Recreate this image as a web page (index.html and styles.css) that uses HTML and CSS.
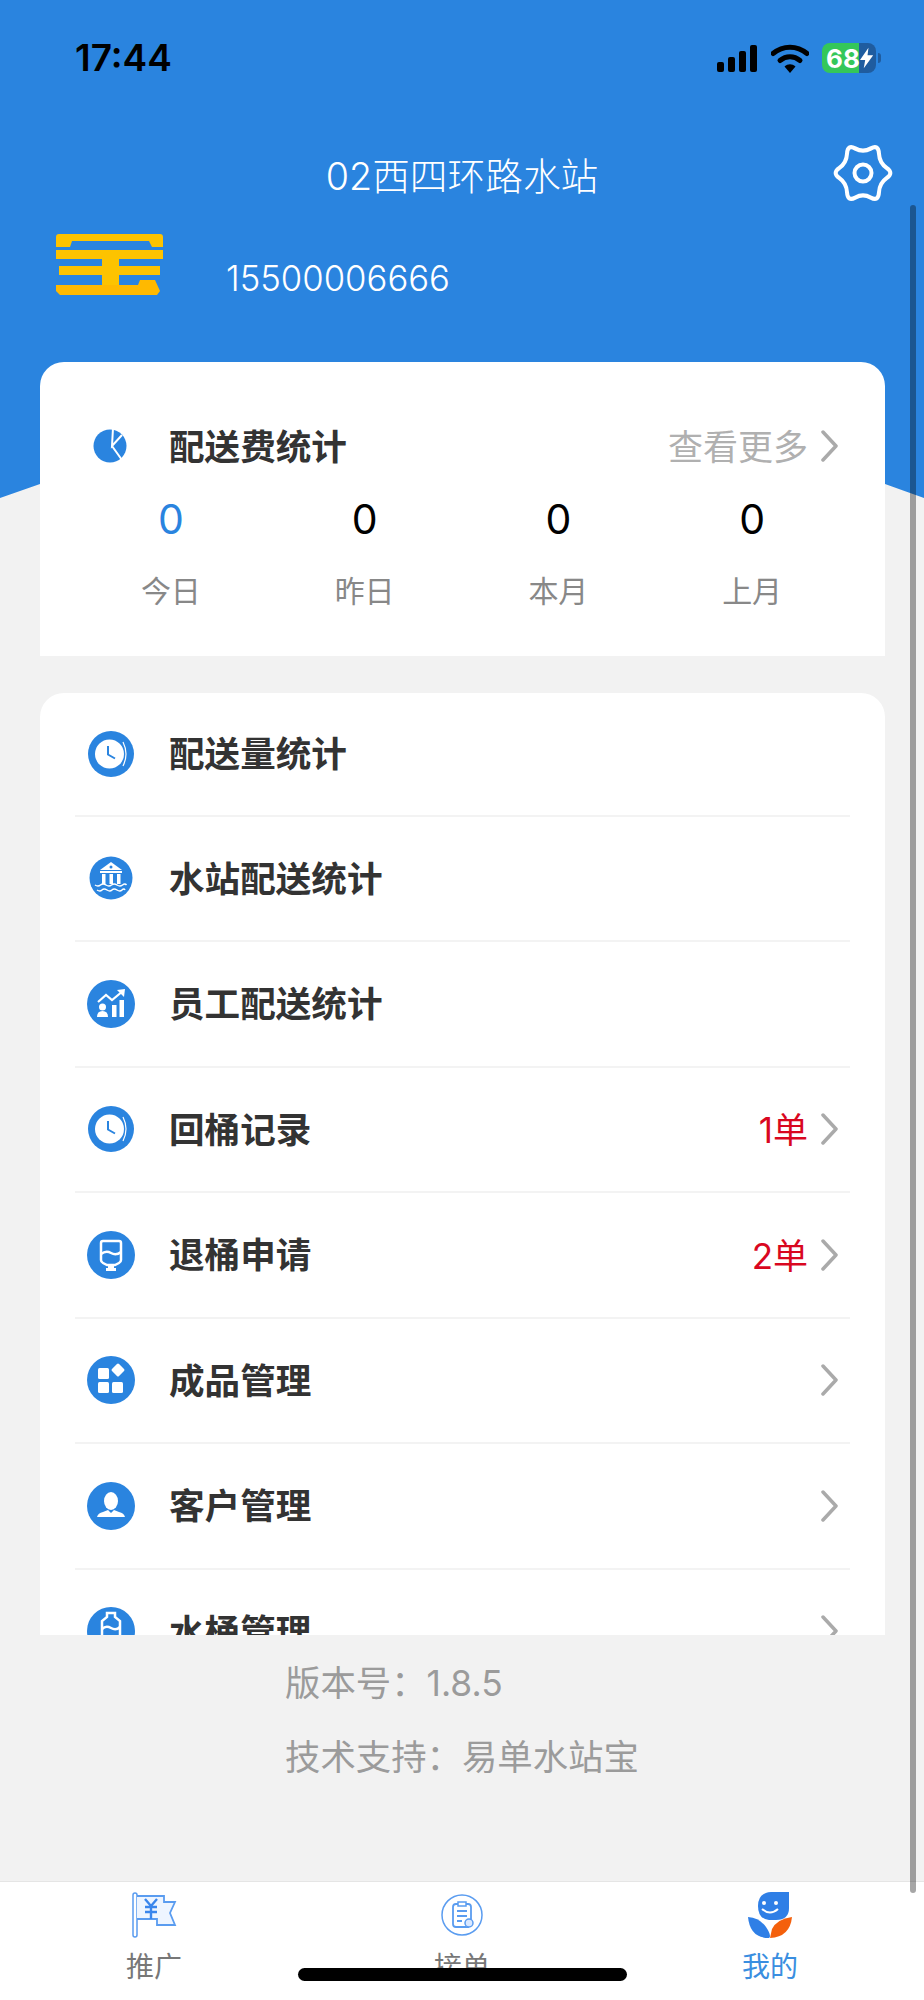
FILE: index.html
```html
<!DOCTYPE html>
<html lang="zh-CN">
<head>
  <meta charset="UTF-8">
  <meta name="viewport" content="width=device-width, initial-scale=1.0">
  <title>我的</title>
  <link rel="stylesheet" href="styles.css">
</head>
<body>
  <div class="phone">
    <div class="main">
      <header class="hero">
        <div class="status-bar">
          <span class="time">17:44</span>
          <div class="status-icons">
            <svg class="signal" width="41" height="27" viewBox="0 0 41 27"><rect x="0" y="17" width="7" height="10" rx="2"/><rect x="11" y="12" width="7" height="15" rx="2"/><rect x="22" y="6" width="7" height="21" rx="2"/><rect x="33" y="0" width="7" height="27" rx="2"/></svg>
            <svg class="wifi" width="38" height="29" viewBox="0 0 38 29"><path d="M2 9.500C12 1 26 1 36 9.500" fill="none" stroke="#000" stroke-width="5" stroke-linecap="round"/><path d="M9 16.500C15 11.500 23 11.500 29 16.500" fill="none" stroke="#000" stroke-width="5" stroke-linecap="round"/><path d="M13.500 22.500C17 19.500 21 19.500 24.500 22.500L19 29z"/></svg>
            <div class="battery">
              <div class="battery-body">
                <span class="battery-level">68</span>
                <svg class="bolt" width="14" height="22" viewBox="0 0 14 22"><path d="M9 0L0 13h5.500L4 22l10-14H8z" fill="#fff"/></svg>
              </div>
              <span class="battery-nub"></span>
            </div>
          </div>
        </div>
        <div class="title-row">
          <span></span>
          <h1 class="title">02西四环路水站</h1>
          <svg class="gear" width="58" height="56" viewBox="0 0 58 56" fill="none" stroke="#fff" stroke-width="4" stroke-linejoin="round"><path transform="matrix(1 0 0 1.070 0 -1.960)" d="M52.730 23.250Q60 28 52.730 32.750Q45.450 37.500 44.980 46.180Q44.500 54.850 36.750 50.930Q29 47 21.250 50.930Q13.500 54.850 13.030 46.180Q12.550 37.500 5.280 32.750Q-2 28 5.280 23.250Q12.550 18.500 13.030 9.830Q13.500 1.150 21.250 5.080Q29 9 36.750 5.080Q44.500 1.150 44.980 9.830Q45.450 18.500 52.730 23.250z"/><circle cx="29" cy="28" r="8.500"/></svg>
        </div>
        <div class="user-row">
          <svg class="logo" width="107" height="61" viewBox="0 0 107 61" fill="#fdc300"><path d="M3 0h101q3 0 3 3v10h-11l-3-6H16l-2 6H0V3q0-3 3-3z"/><rect x="0" y="16" width="107" height="9"/><rect x="3" y="32" width="101" height="9"/><rect x="46" y="25" width="17" height="28"/><path d="M0 51h82l2-5h15l5 11-3 4H4l-4-4z" fill="#ffb900"/></svg>
          <span class="phone-no">15500006666</span>
        </div>
      </header>

      <section class="card fee-card">
        <div class="fee-head">
          <svg class="row-icon" width="46" height="46" viewBox="0 0 46 46"><circle cx="22" cy="23" r="16.500" fill="#2a84df"/><path d="M25 5l-1 18 10-11M24 23l10 14" fill="none" stroke="#fff" stroke-width="2"/></svg>
          <span class="row-name">配送费统计</span>
          <span class="more">查看更多</span>
          <svg class="chevron" width="17" height="32" viewBox="0 0 17 32"><use href="#chev"/></svg>
        </div>
        <div class="stats">
          <div class="stat"><span class="stat-num active">0</span><span class="stat-label">今日</span></div>
          <div class="stat"><span class="stat-num">0</span><span class="stat-label">昨日</span></div>
          <div class="stat"><span class="stat-num">0</span><span class="stat-label">本月</span></div>
          <div class="stat"><span class="stat-num">0</span><span class="stat-label">上月</span></div>
        </div>
      </section>

      <section class="card list-card">
        <div class="row">
          <svg class="row-icon" width="46" height="46" viewBox="0 0 46 46"><use href="#clock"/></svg>
          <span class="row-name">配送量统计</span>
        </div>
        <div class="row">
          <svg class="row-icon" width="46" height="46" viewBox="0 0 46 46"><circle cx="23" cy="23" r="21.500" fill="#2a84df"/><path d="M23 7l11 8H12z" fill="#fff"/><circle cx="23" cy="12" r="1.500" fill="#2a84df"/><rect x="12" y="16" width="22" height="2" fill="#fff"/><rect x="14" y="19" width="3.500" height="10" fill="#fff"/><rect x="21.500" y="19" width="3.500" height="10" fill="#fff"/><rect x="29" y="19" width="3.500" height="10" fill="#fff"/><path d="M7 30q3 2 5.500 0t5.500 0 5.500 0 5.500 0 5.500 0 4 0M9 35q3 2 5 0t5 0 5 0 5 0 5 0 3 0" fill="none" stroke="#fff" stroke-width="1.500"/></svg>
          <span class="row-name">水站配送统计</span>
        </div>
        <div class="row">
          <svg class="row-icon" width="48" height="48" viewBox="0 0 48 48"><circle cx="24" cy="24" r="24" fill="#2a84df"/><path d="M11 22l8-7 6 5 11-9" fill="none" stroke="#fff" stroke-width="2.200"/><path d="M30 10l8-1-1 8z" fill="#fff"/><circle cx="15.500" cy="27" r="3.500" fill="#fff"/><path d="M10 37q0-6 5.500-6t5.500 6z" fill="#fff"/><rect x="25" y="25" width="4.500" height="12" fill="#fff"/><rect x="32.500" y="20" width="4.500" height="17" fill="#fff"/></svg>
          <span class="row-name">员工配送统计</span>
        </div>
        <div class="row">
          <svg class="row-icon" width="46" height="46" viewBox="0 0 46 46"><use href="#clock"/></svg>
          <span class="row-name">回桶记录</span>
          <span class="count">1单</span>
          <svg class="chevron" width="17" height="32" viewBox="0 0 17 32"><use href="#chev"/></svg>
        </div>
        <div class="row">
          <svg class="row-icon" width="48" height="48" viewBox="0 0 48 48"><circle cx="24" cy="24" r="24" fill="#2a84df"/><path d="M16 10h16q2 0 2 2v17q0 2-2 3l-4 2h-8l-4-2q-2-1-2-3V12q0-2 2-2z" fill="none" stroke="#fff" stroke-width="2.500"/><path d="M14 23q5-4 10-1t10-1" fill="none" stroke="#fff" stroke-width="2.500"/><path d="M21 34h6v3h2v3H19v-3h2z" fill="#fff"/></svg>
          <span class="row-name">退桶申请</span>
          <span class="count">2单</span>
          <svg class="chevron" width="17" height="32" viewBox="0 0 17 32"><use href="#chev"/></svg>
        </div>
        <div class="row">
          <svg class="row-icon" width="48" height="48" viewBox="0 0 48 48"><circle cx="24" cy="24" r="24" fill="#2a84df"/><rect x="11" y="12" width="11" height="11" rx="1.500" fill="#fff"/><rect x="11" y="26" width="11" height="11" rx="1.500" fill="#fff"/><rect x="25" y="26" width="11" height="11" rx="1.500" fill="#fff"/><rect x="26" y="9" width="10" height="10" rx="1.500" fill="#fff" transform="rotate(45 31 14)"/></svg>
          <span class="row-name">成品管理</span>
          <svg class="chevron" width="17" height="32" viewBox="0 0 17 32"><use href="#chev"/></svg>
        </div>
        <div class="row">
          <svg class="row-icon" width="48" height="48" viewBox="0 0 48 48"><circle cx="24" cy="24" r="24" fill="#2a84df"/><ellipse cx="24" cy="19" rx="7" ry="9" fill="#fff"/><path d="M10 35q1-4 6-5l5-2 3 3 3-3 5 2q5 1 6 5z" fill="#fff"/></svg>
          <span class="row-name">客户管理</span>
          <svg class="chevron" width="17" height="32" viewBox="0 0 17 32"><use href="#chev"/></svg>
        </div>
        <div class="row">
          <svg class="row-icon" width="48" height="48" viewBox="0 0 48 48"><circle cx="24" cy="24" r="24" fill="#2a84df"/><path d="M20 6h8v4l5 4v20q0 2-2 2H17q-2 0-2-2V14l5-4z" fill="none" stroke="#fff" stroke-width="2.500"/><path d="M15 22q4-4 9-1t9-1" fill="none" stroke="#fff" stroke-width="2.500"/></svg>
          <span class="row-name">水桶管理</span>
          <svg class="chevron" width="17" height="32" viewBox="0 0 17 32"><use href="#chev"/></svg>
        </div>
      </section>
    </div>

    <footer class="about">
      <p>版本号：1.8.5</p>
      <p>技术支持：易单水站宝</p>
    </footer>

    <nav class="tabs">
      <div class="tab">
        <svg width="46" height="46" viewBox="0 0 46 46"><rect x="2" y="1" width="4" height="44" rx="2" fill="#fff" stroke="#5a9cf0" stroke-width="1.500"/><path d="M6 4h27v6h11l-5 11 5 12H26v-6H6" fill="#eef5ff" stroke="#5a9cf0" stroke-width="1.800"/><path d="M14 7l6 7 6-7M20 14v13M14 15h12M14 20h12" fill="none" stroke="#3a86ec" stroke-width="2.400"/></svg>
        <span class="tab-label">推广</span>
      </div>
      <div class="tab">
        <svg width="42" height="42" viewBox="0 0 42 42" fill="none" stroke="#5a9cf0" stroke-width="1.500"><circle cx="21" cy="21" r="20"/><path d="M15 10h12q3 0 3 3v13M28 33H15q-3 0-3-3V13q0-3 3-3" stroke-width="1.800"/><rect x="17" y="8" width="8" height="4" fill="#fff"/><path d="M16 17h10M16 22h10M16 27h5" stroke-width="1.800"/><circle cx="28" cy="29" r="4" fill="#dbe9ff"/></svg>
        <span class="tab-label">接单</span>
      </div>
      <div class="tab tab-on">
        <svg width="46" height="46" viewBox="0 0 46 46"><path d="M24 0h18v16q0 12-13 12h-7q-11-1-11-14T24 0z" fill="#2f7fe6"/><circle cx="17" cy="11" r="2" fill="#fff"/><circle cx="29" cy="11" r="2" fill="#fff"/><path d="M15 17q8 7 16 0" fill="none" stroke="#fff" stroke-width="2"/><path d="M1 25q12 1 18 10t3 11Q3 46 1 25z" fill="#2f7fe6"/><path d="M45 25q-15 2-20 12l-2 9q20-1 22-21z" fill="#f4600c"/></svg>
        <span class="tab-label">我的</span>
      </div>
    </nav>

    <span class="scrollbar"></span>
    <span class="home-bar"></span>
  </div>

  <svg class="defs" width="0" height="0">
    <defs>
      <g id="clock">
        <circle cx="23" cy="23" r="23" fill="#2a84df"/>
        <circle cx="21.500" cy="23" r="14.500" fill="#fff"/>
        <path d="M35 11q6 12 0 24" fill="none" stroke="#fff" stroke-width="1.200"/>
        <path d="M20 15v8.500l7 4" fill="none" stroke="#2a84df" stroke-width="2"/>
      </g>
      <path id="chev" d="M2 2l13 14L2 30" fill="none" stroke="#aaa" stroke-width="3.500" stroke-linecap="round" stroke-linejoin="round"/>
    </defs>
  </svg>
</body>
</html>
```

FILE: styles.css
```css
body {
  margin: 0;
  font-family: Inter, "Noto Sans CJK SC", sans-serif;
  background-color: #f2f2f2;
}
.phone {
  position: relative;
  width: 924px;
  height: 2000px;
  overflow: hidden;
  display: flex;
  flex-direction: column;
  background-color: #f2f2f2;
}
.main {
  height: 1635px;
  overflow: hidden;
  flex-shrink: 0;
}
.defs {
  position: absolute;
}

/* blue top part */
.hero {
  height: 500px;
  box-sizing: border-box;
  padding-top: 43px;
  background-color: #2a84df;
  clip-path: polygon(0 0, 100% 0, 100% 498px, 885px 484px, 50% 400px, 40px 484px, 0 498px);
}
.status-bar {
  height: 30px;
  display: flex;
  align-items: center;
  justify-content: space-between;
  padding: 0 43px 0 75px;
}
.time {
  font-size: 37px;
  font-weight: 600;
  color: #000;
  line-height: 30px;
}
.status-icons {
  display: flex;
  align-items: center;
  gap: 13px;
}
.battery {
  display: flex;
  align-items: center;
  gap: 2px;
}
.battery-body {
  width: 54px;
  height: 30px;
  border-radius: 8px;
  display: flex;
  align-items: center;
  justify-content: space-between;
  padding: 0 3px 0 4px;
  box-sizing: border-box;
  background: linear-gradient(to right, #34c759 37px, #1f5c9f 37px);
}
.battery-level {
  font-size: 26px;
  font-weight: 700;
  color: #fff;
}
.battery-nub {
  width: 3px;
  height: 10px;
  border-radius: 0 3px 3px 0;
  background-color: #1f5c9f;
}
.title-row {
  display: grid;
  grid-template-columns: 1fr auto 1fr;
  align-items: center;
  margin-top: 72px;
  height: 56px;
  padding-right: 32px;
  padding-left: 32px;
}
.title {
  margin: 0;
  font-size: 37.700px;
  font-weight: 300;
  color: #fff;
}
.gear {
  justify-self: end;
  overflow: visible;
}
.user-row {
  display: flex;
  align-items: flex-start;
  margin-top: 33px;
  padding-left: 56px;
  gap: 63px;
}
.phone-no {
  margin-top: 24px;
  font-size: 34.700px;
  line-height: 40px;
  font-weight: 300;
  color: #fff;
}

/* cards */
.card {
  margin: 0 39px 0 40px;
  background-color: #fff;
}
.fee-card {
  position: relative;
  margin-top: -138px;
  height: 294px;
  box-sizing: border-box;
  padding: 60px 47px 0 47px;
  border-radius: 24px 24px 0 0;
}
.fee-head {
  display: flex;
  align-items: center;
  height: 48px;
}
.row-icon {
  flex-shrink: 0;
  width: 48px;
  margin-right: 34px;
}
.row-name {
  margin-bottom: 3px;
  font-size: 35.600px;
  font-weight: 700;
  color: #333;
}
.more {
  margin-left: auto;
  margin-bottom: 3px;
  font-size: 35px;
  color: #b0b0b0;
}
.chevron {
  flex-shrink: 0;
  margin-left: 13px;
}
.stats {
  display: grid;
  grid-template-columns: repeat(4, 1fr);
  margin: 22px -11px 0 -13px;
}
.stat {
  display: flex;
  flex-direction: column;
  align-items: center;
}
.stat-num {
  font-size: 41px;
  line-height: 54px;
  font-weight: 400;
  color: #000;
}
.stat-num.active {
  color: #2a84df;
}
.stat-label {
  margin-top: 25px;
  font-size: 30px;
  line-height: 40px;
  color: #888;
}
.list-card {
  margin-top: 37px;
  padding: 0 35px;
  border-radius: 24px 24px 0 0;
}
.row {
  display: flex;
  align-items: center;
  height: 123.500px;
  border-bottom: 2px solid #f3f3f3;
  padding-left: 12px;
  padding-right: 12px;
}
.row:first-child {
  height: 121.500px;
}
.row .row-icon {
  margin-right: 34px;
}
.row .row-name {
  margin-bottom: 4px;
}
.count {
  margin-left: auto;
  margin-bottom: 3px;
  font-size: 35px;
  color: #d9071f;
}
.count + .chevron {
  margin-left: 13px;
}
.row-name + .chevron {
  margin-left: auto;
}

/* version text */
.about {
  flex: 1;
  padding: 23px 0 0 285px;
}
.about p {
  margin: 0 0 22px 0;
  font-size: 35.400px;
  line-height: 52px;
  color: #9b9b9b;
}

/* bottom tabs */
.tabs {
  height: 118px;
  flex-shrink: 0;
  display: grid;
  grid-template-columns: repeat(3, 1fr);
  background-color: #fff;
  border-top: 1px solid #e5e5e5;
}
.tab {
  display: flex;
  flex-direction: column;
  align-items: center;
  padding-top: 10px;
}
.tab svg {
  height: 46px;
}
.tab-label {
  margin-top: 10px;
  font-size: 28px;
  line-height: 38px;
  color: #777;
}
.tab-on .tab-label {
  color: #3a8ee0;
}

/* overlays */
.scrollbar {
  position: absolute;
  left: 910px;
  top: 205px;
  width: 6px;
  height: 1688px;
  border-radius: 3px;
  background-color: rgba(0, 0, 0, 0.35);
}
.home-bar {
  position: absolute;
  left: 298px;
  top: 1968px;
  width: 329px;
  height: 13px;
  border-radius: 7px;
  background-color: #000;
}
```
